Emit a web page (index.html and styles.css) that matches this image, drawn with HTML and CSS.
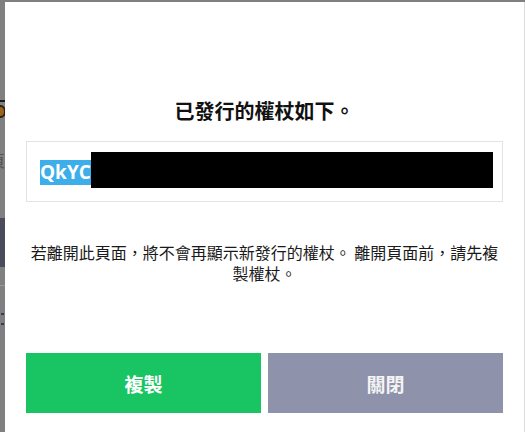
FILE: index.html
```html
<!DOCTYPE html>
<html lang="zh-Hant">
<head>
<meta charset="utf-8">
<link rel="stylesheet" href="styles.css">
</head>
<body>
<div class="backdrop">
  <div class="bd-line"></div>
  <div class="bd-icon"></div>
  <div class="bd-text">頁</div>
  <div class="bd-block"></div>
  <div class="bd-rule"></div>
  <div class="bd-mark"></div>
</div>
<div class="modal">
  <h1 class="title">已發行的權杖如下。</h1>
  <div class="token-box">
    <span class="token-sel">QkYC</span><span class="token-redact"></span>
  </div>
  <p class="note">若離開此頁面，將不會再顯示新發行的權杖。 離開頁面前，請先複製權杖。</p>
  <div class="actions">
    <button class="btn btn-copy">複製</button>
    <button class="btn btn-close">關閉</button>
  </div>
</div>
</body>
</html>
```
FILE: styles.css
```css
html, body {
  margin: 0;
  padding: 0;
  height: 432px;
  overflow: hidden;
}
body {
  background: #808080;
  display: flex;
  font-family: "Noto Sans CJK TC", "Noto Sans", sans-serif;
  color: #111;
}
.backdrop {
  position: relative;
  width: 5px;
  flex: none;
  overflow: hidden;
}
.bd-line {
  position: absolute;
  top: 100px;
  left: 0;
  width: 5px;
  height: 2px;
  background: #1a1a1a;
}
.bd-icon {
  position: absolute;
  top: 105px;
  left: -5px;
  width: 7px;
  height: 9px;
  border: 2px solid #2a2010;
  border-radius: 50%;
  background: #9a6420;
}
.bd-text {
  position: absolute;
  top: 148px;
  left: -11px;
  font-size: 16px;
  color: #555;
}
.bd-block {
  position: absolute;
  top: 218px;
  left: 0;
  width: 5px;
  height: 49px;
  background: #4b4c5b;
}
.bd-rule {
  position: absolute;
  top: 285px;
  left: 0;
  width: 5px;
  height: 1px;
  background: #999;
}
.bd-mark {
  position: absolute;
  top: 313px;
  left: 1px;
  width: 3px;
  height: 8px;
  border-top: 2px solid #3a3a55;
  border-bottom: 2px solid #3a3a55;
}
.modal {
  flex: 1;
  margin-top: 2px;
  background: #fff;
  border-right: 1px solid #dcdcdc;
  padding: 95px 21px 0 21px;
  display: flex;
  flex-direction: column;
}
.title {
  margin: 0;
  font-size: 20px;
  line-height: 27px;
  font-weight: 700;
  text-align: center;
  color: #111;
}
.token-box {
  margin-top: 17px;
  height: 59px;
  border: 1px solid #e3e3e3;
  display: flex;
  align-items: center;
  padding-left: 13px;
}
.token-sel {
  background: #3daee9;
  color: #fff;
  font-family: "Open Sans", "Noto Sans", sans-serif;
  font-weight: 700;
  font-size: 19px;
  line-height: 25px;
  height: 25px;
  margin-top: 2px;
}
.token-redact {
  width: 402px;
  height: 36px;
  background: #000;
  margin-top: -4px;
}
.note {
  margin: 40px 0 0 0;
  font-size: 16px;
  line-height: 21px;
  text-align: center;
  color: #1a1a1a;
}
.actions {
  margin-top: 69px;
  display: flex;
  gap: 7px;
}
.btn {
  flex: 1;
  height: 60px;
  border: none;
  border-radius: 0;
  font-family: "Noto Sans CJK TC", "Noto Sans", sans-serif;
  font-size: 19px;
  font-weight: 700;
  color: #fff;
  padding: 0;
}
.btn-copy {
  background: #19c463;
}
.btn-close {
  background: #8e92ab;
  color: #f4f4f4;
}
```
